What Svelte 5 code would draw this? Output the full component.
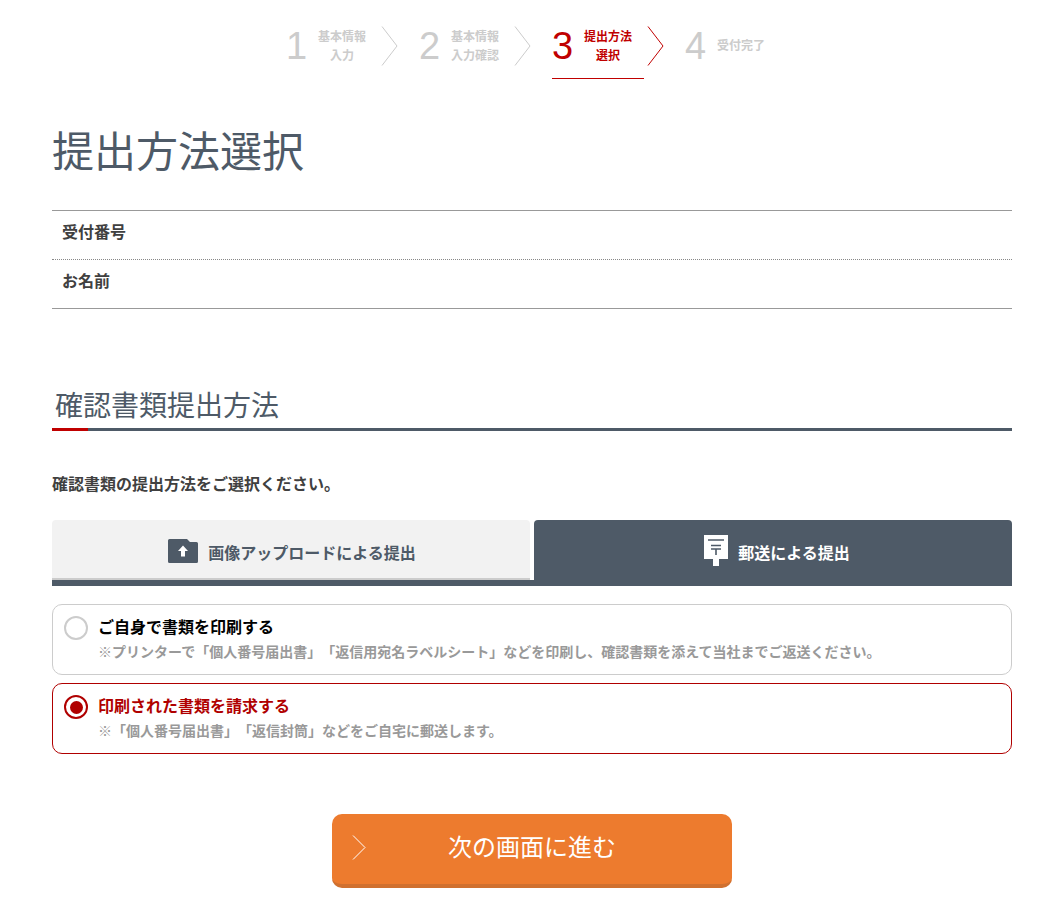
<script>
  const steps = [
    { no: 1, label: ['基本情報', '入力'] },
    { no: 2, label: ['基本情報', '入力確認'] },
    { no: 3, label: ['提出方法', '選択'], current: true },
    { no: 4, label: ['受付完了'], last: true }
  ];

  let tab = 'post';
  let method = 'request';
</script>

<div class="page">
  <ol class="steps">
    {#each steps as step}
      <li class="step" class:current={step.current} class:last={step.last}>
        <div class="step-body">
          <span class="no">{step.no}</span>
          <span class="label">
            {#each step.label as line}<span>{line}</span>{/each}
          </span>
        </div>
        {#if !step.last}
          <svg class="arrow" width="17" height="40" viewBox="0 0 17 40" fill="none">
            <path d="M1 0.5 L16 20 L1 39.5" stroke="currentColor" stroke-width="1" />
          </svg>
        {/if}
      </li>
    {/each}
  </ol>

  <h1>提出方法選択</h1>

  <dl class="info">
    <div class="row"><dt>受付番号</dt><dd></dd></div>
    <div class="row"><dt>お名前</dt><dd></dd></div>
  </dl>

  <h2>確認書類提出方法</h2>

  <p class="lead">確認書類の提出方法をご選択ください。</p>

  <div class="tabs">
    <button class="tab" class:active={tab === 'upload'} on:click={() => (tab = 'upload')}>
      <svg class="icon-folder" width="30" height="24" viewBox="0 0 30 24">
        <path d="M1.5 0 H19 L22 3 H28.5 Q30 3 30 4.5 V22.5 Q30 24 28.5 24 H1.5 Q0 24 0 22.5 V1.5 Q0 0 1.5 0 Z" fill="#4e5a67" />
        <path d="M15 6.5 L20 12 H17 V17.5 H13 V12 H10 Z" fill="#fff" />
      </svg>
      画像アップロードによる提出
    </button>
    <button class="tab" class:active={tab === 'post'} on:click={() => (tab = 'post')}>
      <svg class="icon-post" width="24" height="31" viewBox="0 0 24 31">
        <path d="M0 0 H24 V24 H15 V31 H9 V24 H0 Z" fill="#fff" />
        <path d="M4 5 H20 M7 10.5 H17 M7 14 H17 M12 14 V20" stroke="#4e5a67" stroke-width="1.6" fill="none" />
      </svg>
      郵送による提出
    </button>
  </div>

  <div class="options">
    <label class="option" class:checked={method === 'self'}>
      <input type="radio" bind:group={method} value="self" />
      <span class="radio"></span>
      <span class="text">
        <strong>ご自身で書類を印刷する</strong>
        <small>※プリンターで「個人番号届出書」「返信用宛名ラベルシート」などを印刷し、確認書類を添えて当社までご返送ください。</small>
      </span>
    </label>
    <label class="option" class:checked={method === 'request'}>
      <input type="radio" bind:group={method} value="request" />
      <span class="radio"></span>
      <span class="text">
        <strong>印刷された書類を請求する</strong>
        <small>※「個人番号届出書」「返信封筒」などをご自宅に郵送します。</small>
      </span>
    </label>
  </div>

  <button class="next">
    <svg class="next-arrow" width="14" height="25" viewBox="0 0 14 25" fill="none">
      <path d="M1 0.5 L13 12.5 L1 24.5" stroke="#fff" stroke-width="1" />
    </svg>
    次の画面に進む
  </button>
</div>

<style>
  :global(body) {
    background: #fff;
    font-family: "Noto Sans CJK JP", "Liberation Sans", sans-serif;
    color: #4e5a67;
    text-spacing-trim: space-all;
  }

  .page {
    width: 960px;
    margin-left: 52px;
    padding-bottom: 12px;
  }

  .steps {
    display: flex;
    justify-content: center;
    margin: 0;
    padding: 26px 13px 0 0;
    list-style: none;
    height: 53px;
    box-sizing: content-box;
    color: #ccc;
  }

  .step {
    display: flex;
    align-items: flex-start;
    margin-right: 21px;
  }

  .step.last {
    margin-right: 0;
  }

  .step-body {
    display: flex;
    align-items: center;
    height: 40px;
    gap: 11px;
    padding-right: 15px;
  }

  .last .step-body {
    padding-right: 0;
  }

  .current {
    color: #c00000;
  }

  .current .step-body {
    height: 52px;
    align-items: flex-start;
    padding-right: 12px;
    margin-right: 3px;
    border-bottom: 1px solid #c00000;
  }

  .no {
    font-family: "Liberation Sans", sans-serif;
    font-size: 38px;
    line-height: 40px;
    width: 21px;
  }

  .label {
    display: flex;
    flex-direction: column;
    align-items: center;
    font-size: 12px;
    font-weight: 700;
    line-height: 19px;
    width: 48px;
    margin-bottom: 2px;
    white-space: nowrap;
  }

  .last .label {
    margin-bottom: 4px;
  }

  .current .label {
    margin-top: 0;
  }

  h1 {
    margin: 41px 0 0;
    font-size: 42px;
    font-weight: 400;
    line-height: 58px;
    height: 90px;
    color: #4e5a67;
  }

  .info {
    margin: 0;
    border-top: 1px solid #999;
    border-bottom: 1px solid #999;
  }

  .row {
    display: flex;
    align-items: center;
    height: 48px;
    box-sizing: border-box;
    padding: 0 0 8px 10px;
  }

  .row + .row {
    height: 49px;
    border-top: 1px dotted #888;
  }

  dt {
    font-size: 16px;
    font-weight: 700;
    color: #404040;
  }

  dd {
    margin: 0;
  }

  h2 {
    margin: 69px 0 0;
    padding: 0 0 0 3px;
    height: 50px;
    font-size: 28px;
    font-weight: 400;
    line-height: 52px;
    border-bottom: 3px solid #4e5a67;
    position: relative;
    color: #4e5a67;
  }

  h2::after {
    content: "";
    position: absolute;
    left: 0;
    bottom: -3px;
    width: 36px;
    height: 3px;
    background: #c00000;
  }

  .lead {
    margin: 40px 0 0;
    font-size: 16px;
    font-weight: 700;
    line-height: 24px;
    color: #404040;
  }

  .tabs {
    display: grid;
    grid-template-columns: 478px 478px;
    gap: 4px;
    margin-top: 25px;
    border-bottom: 6px solid #4e5a67;
  }

  .tab {
    display: flex;
    align-items: center;
    justify-content: center;
    gap: 10px;
    height: 60px;
    border: 0;
    border-bottom: 2px solid #ccc;
    border-radius: 4px 4px 0 0;
    background: #f2f2f2;
    color: #4e5a67;
    font: inherit;
    font-size: 16px;
    font-weight: 700;
    padding: 6px 0 0 2px;
    cursor: pointer;
  }

  .tab:last-child {
    padding-left: 8px;
  }

  .tab.active {
    background: #4e5a67;
    border-bottom-color: #4e5a67;
    color: #fff;
  }

  .icon-folder {
    margin-top: -2px;
  }

  .icon-post {
    margin-top: -4px;
  }

  .options {
    display: flex;
    flex-direction: column;
    gap: 8px;
    margin-top: 18px;
  }

  .option {
    display: flex;
    align-items: flex-start;
    gap: 10px;
    height: 71px;
    box-sizing: border-box;
    padding: 9px 11px;
    border: 1px solid #ccc;
    border-radius: 10px;
    cursor: pointer;
  }

  .option.checked {
    border-color: #b00000;
  }

  .option input {
    display: none;
  }

  .radio {
    flex: none;
    width: 24px;
    height: 24px;
    border: 2px solid #ccc;
    border-radius: 50%;
    box-sizing: border-box;
    margin-top: 2px;
    position: relative;
  }

  .checked .radio {
    border-color: #b00000;
  }

  .checked .radio::after {
    content: "";
    position: absolute;
    inset: 3.5px;
    border-radius: 50%;
    background: #b00000;
  }

  .text {
    display: flex;
    flex-direction: column;
  }

  strong {
    font-size: 16px;
    font-weight: 700;
    line-height: 24px;
    margin-bottom: 1px;
    color: #000;
  }

  .checked strong {
    color: #b00000;
  }

  small {
    font-size: 14px;
    font-weight: 700;
    line-height: 24px;
    color: #999;
    white-space: nowrap;
  }

  .next {
    display: block;
    position: relative;
    width: 400px;
    height: 74px;
    margin: 60px auto 0;
    border: 0;
    border-bottom: 4px solid #d0702f;
    border-radius: 10px;
    background: #ed7b2e;
    color: #fff;
    font: inherit;
    font-size: 24px;
    line-height: 1;
    padding: 0 0 6px;
    cursor: pointer;
  }

  .next-arrow {
    position: absolute;
    left: 20px;
    top: 21px;
  }
</style>
